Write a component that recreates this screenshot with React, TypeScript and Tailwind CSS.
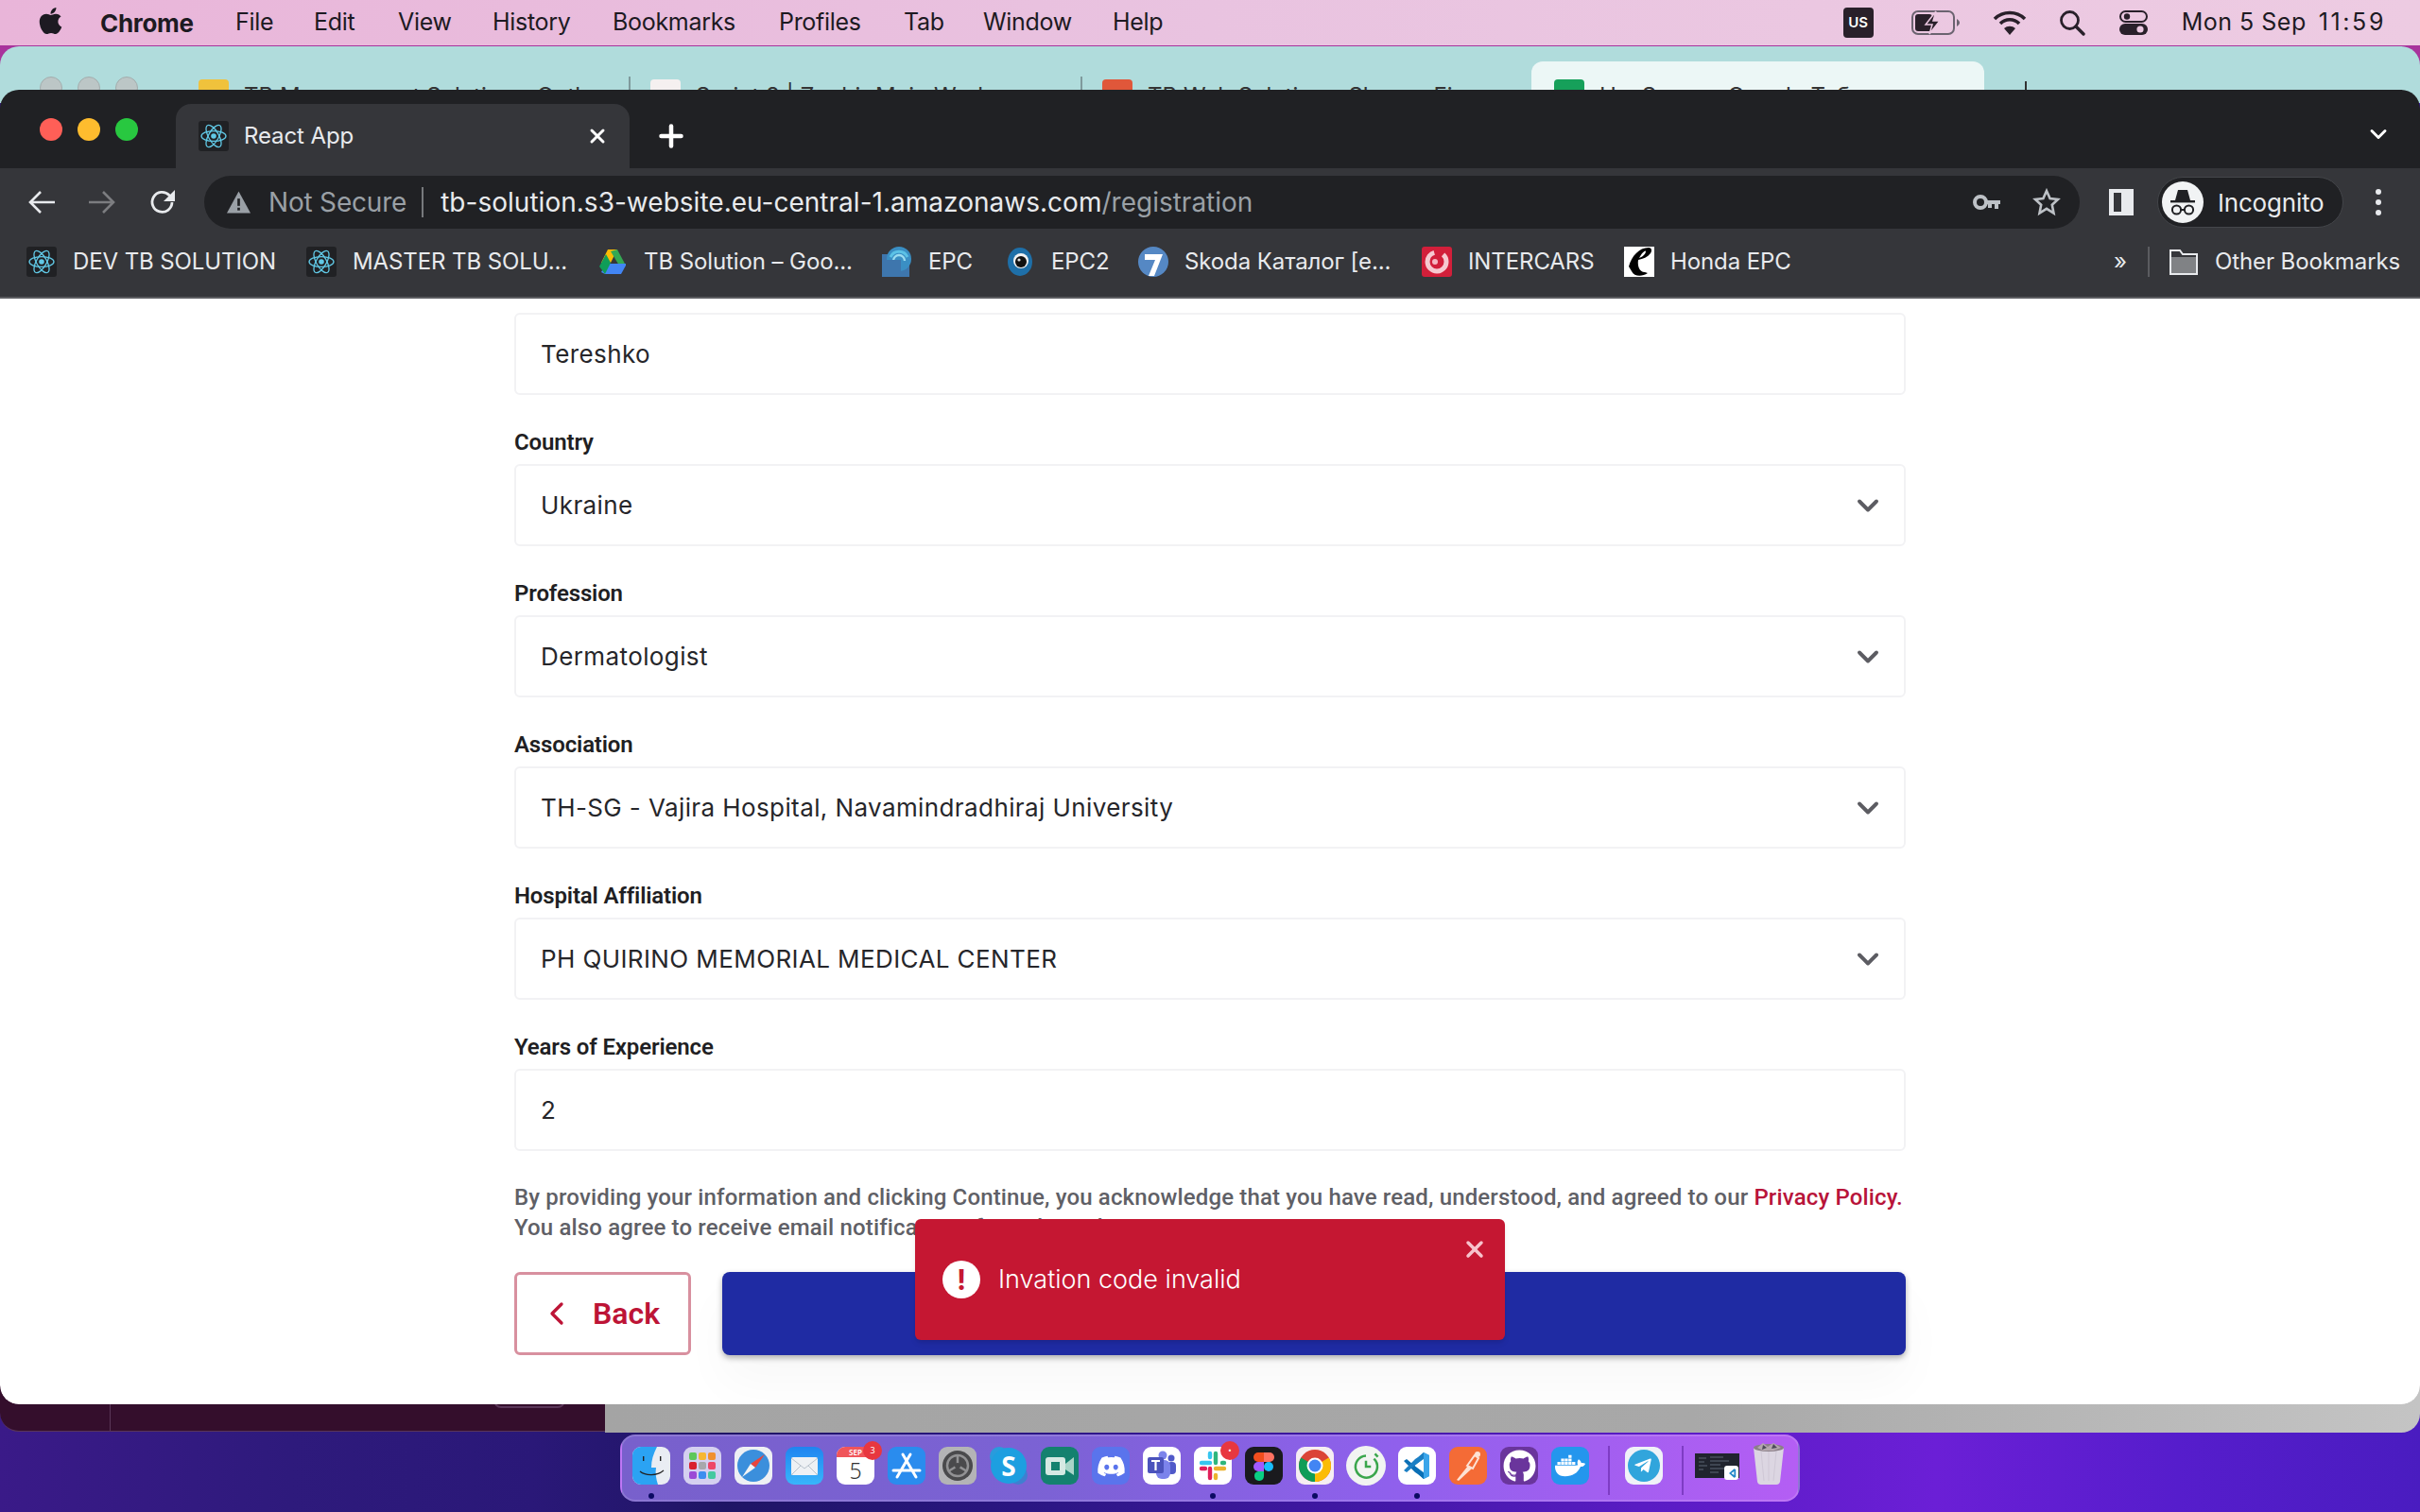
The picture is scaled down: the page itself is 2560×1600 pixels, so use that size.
import { ReactNode } from "react";
import { FaApple, FaDiscord, FaDocker, FaGithub, FaTelegramPlane } from "react-icons/fa";
import { ChevronDown, ChevronLeft, Plus, X } from "lucide-react";

const UI = "font-['Inter','Liberation_Sans',sans-serif]";

function ReactIcon() {
  return (
    <svg viewBox="0 0 32 32" className="w-8 h-8 shrink-0">
      <rect width="32" height="32" rx="3" fill="#202124" />
      <g fill="none" stroke="#61c9e6" strokeWidth="1.3">
        <ellipse cx="16" cy="16" rx="13" ry="5.4" />
        <ellipse cx="16" cy="16" rx="13" ry="5.4" transform="rotate(60 16 16)" />
        <ellipse cx="16" cy="16" rx="13" ry="5.4" transform="rotate(120 16 16)" />
      </g>
      <circle cx="16" cy="16" r="2.8" fill="#61c9e6" />
    </svg>
  );
}

function DriveIcon() {
  return (
    <svg viewBox="0 0 32 32" className="w-8 h-8 shrink-0">
      <polygon points="11,3 21,3 14,17 4,17" fill="#fbbc04" transform="translate(0 0)" />
      <polygon points="21,3 30,20 23,20 14,5" fill="#34a853" />
      <polygon points="4,27 9,18 30,18 30,20 25,29 8,29" fill="#4285f4" />
      <polygon points="2,21 9,8 14,17 8,29" fill="#0f9d58" />
    </svg>
  );
}

function EpcIcon() {
  return (
    <svg viewBox="0 0 32 32" className="w-8 h-8 shrink-0">
      <rect x="0" y="8" width="29" height="24" fill="#3e76ad" />
      <circle cx="18" cy="13" r="13" fill="#3a8fc4" />
      <path d="M9 11a10 10 0 0 1 18 0" fill="none" stroke="#5cc2e6" strokeWidth="3" />
      <path d="M12 15a6 6 0 0 1 12 0" fill="none" stroke="#9adcf0" strokeWidth="2.4" />
      <rect x="0" y="14" width="20" height="18" fill="#3e76ad" />
    </svg>
  );
}

function Epc2Icon() {
  return (
    <svg viewBox="0 0 32 32" className="w-8 h-8 shrink-0">
      <ellipse cx="16" cy="16" rx="13" ry="15" fill="#1e6fa8" />
      <circle cx="17" cy="15" r="8" fill="#f1f1f1" />
      <circle cx="17" cy="16" r="6" fill="#111" />
      <circle cx="15" cy="14" r="1.6" fill="#ddd" />
    </svg>
  );
}

function SkodaIcon() {
  return (
    <svg viewBox="0 0 32 32" className="w-8 h-8 shrink-0">
      <circle cx="16" cy="16" r="16" fill="#5588c4" />
      <path d="M7 8h19l-9 23h-6l7-17H7z" fill="#fff" />
    </svg>
  );
}

function IntercarsIcon() {
  return (
    <svg viewBox="0 0 32 32" className="w-8 h-8 shrink-0">
      <rect width="32" height="32" rx="3" fill="#d21f3a" />
      <circle cx="16" cy="16" r="10" fill="none" stroke="#f6c9d0" strokeWidth="5" strokeDasharray="44 10" />
      <circle cx="14" cy="16" r="3" fill="#f4b6c0" />
    </svg>
  );
}

function HondaIcon() {
  return (
    <svg viewBox="0 0 32 32" className="w-8 h-8 shrink-0">
      <rect width="32" height="32" fill="#fff" />
      <path d="M5 21C8 10 16 1 26 1c3 0 4 3 2 6-3 4-8 6-13 7-1 6 1 13 7 13l3 1c-6 4-14 4-17-2-1-2-2-3-3-5zm11-9c3-1 7-4 7-7 0-2-4 1-7 7z" fill="#000" />
    </svg>
  );
}

function FolderIcon() {
  return (
    <svg viewBox="0 0 32 32" className="w-8 h-8 shrink-0">
      <path d="M2 4h10l3 4h15v21H2z" fill="#35363a" stroke="#e8eaed" strokeWidth="2" />
      <rect x="3" y="11" width="26" height="17" fill="#808285" />
    </svg>
  );
}

function ReactBookmark({ label, width, icon }: { label: string; width: string; icon: ReactNode }) {
  return (
    <div className={`flex items-center gap-[17px] shrink-0 ${width}`}>
      {icon}
      <span className="text-[24px] leading-8 text-[#e8eaed] whitespace-nowrap tracking-[-0.1px]">{label}</span>
    </div>
  );
}

function DockTile({ children, dot }: { children: ReactNode; dot?: boolean }) {
  return (
    <div className="relative w-10 h-10 shrink-0">
      {children}
      {dot && <span className="absolute left-[17px] top-[49px] w-1.5 h-1.5 rounded-full bg-[#0b0a63]" />}
    </div>
  );
}

function Badge({ label }: { label: string }) {
  return (
    <span className="absolute -top-[6px] -right-2 w-5 h-5 rounded-full bg-[#e8373f] text-white text-[9px] leading-5 text-center">
      {label}
    </span>
  );
}

function Dock() {
  return (
    <div className="absolute left-[656px] top-[1518px] w-[1248px] h-[71px] rounded-[16px] border-2 border-[#ffffff26] bg-[linear-gradient(90deg,#7860cc_0%,#7b62d4_35%,#8f60ec_65%,#b45ef4_100%)] flex items-start pl-[11px] pt-[11px] gap-[14px]">
      <DockTile dot>
        <svg viewBox="0 0 40 40" className="w-10 h-10">
          <rect width="40" height="40" rx="9" fill="#e9edf3" />
          <path d="M9 0h17c-4 8-6 14-6 22h5c-1 6 0 12 2 18H9a9 9 0 0 1-9-9V9a9 9 0 0 1 9-9z" fill="#2ba3f3" />
          <path d="M8 26c6 5 18 5 25-1" fill="none" stroke="#222" strokeWidth="1.2" />
          <rect x="11" y="10" width="1.4" height="5" fill="#222" />
          <rect x="29" y="10" width="1.4" height="5" fill="#222" />
        </svg>
      </DockTile>
      <DockTile>
        <svg viewBox="0 0 40 40" className="w-10 h-10">
          <rect width="40" height="40" rx="9" fill="#d5d0f0" />
          {[
            [6, 6, "#5fc75a"], [16, 6, "#f7b733"], [26, 6, "#f0902f"],
            [6, 16, "#d9202e"], [16, 16, "#a8a8ac"], [26, 16, "#ee4766"],
            [6, 26, "#9b4bd6"], [16, 26, "#3c8df0"], [26, 26, "#45c9a0"],
          ].map(([x, y, c]) => (
            <rect key={`${x}-${y}`} x={x as number} y={y as number} width="8" height="8" rx="2" fill={c as string} />
          ))}
        </svg>
      </DockTile>
      <DockTile>
        <svg viewBox="0 0 40 40" className="w-10 h-10">
          <rect width="40" height="40" rx="9" fill="#eef0f4" />
          <circle cx="20" cy="20" r="17" fill="#3b8fdc" />
          <polygon points="32,8 17,18 22,22" fill="#e8453c" />
          <polygon points="8,32 17,18 22,22" fill="#f4f4f4" />
        </svg>
      </DockTile>
      <DockTile>
        <svg viewBox="0 0 40 40" className="w-10 h-10">
          <defs>
            <linearGradient id="mail" x1="0" y1="0" x2="0" y2="1">
              <stop offset="0" stopColor="#1f84f0" />
              <stop offset="1" stopColor="#38b6fb" />
            </linearGradient>
          </defs>
          <rect width="40" height="40" rx="9" fill="url(#mail)" />
          <rect x="6" y="11" width="28" height="19" rx="2" fill="#eef1f4" />
          <path d="M6 12l14 11 14-11M6 30l10-10M34 30L24 20" fill="none" stroke="#b9c2cc" strokeWidth="1" />
        </svg>
      </DockTile>
      <DockTile>
        <div className="w-10 h-10 rounded-[9px] overflow-hidden bg-white flex flex-col items-center">
          <div className="w-full h-[11px] bg-[#f0555a] text-white text-[8px] leading-[11px] text-center font-semibold">SEP</div>
          <div className="text-[#333] text-[23px] leading-[29px] font-light">5</div>
        </div>
        <Badge label="3" />
      </DockTile>
      <DockTile>
        <svg viewBox="0 0 40 40" className="w-10 h-10">
          <rect width="40" height="40" rx="9" fill="#2a8cee" />
          <path d="M16 8l14 24M24 8L10 32M6 25h28" fill="none" stroke="#fff" strokeWidth="3" strokeLinecap="round" />
        </svg>
      </DockTile>
      <DockTile>
        <svg viewBox="0 0 40 40" className="w-10 h-10">
          <rect width="40" height="40" rx="9" fill="#b4b4b6" />
          <circle cx="20" cy="20" r="16" fill="#4a4a4c" />
          <circle cx="20" cy="20" r="11" fill="none" stroke="#929294" strokeWidth="2.5" />
          <path d="M20 20V9M20 20l-10 6M20 20l10 6" stroke="#929294" strokeWidth="2.5" />
          <circle cx="20" cy="20" r="3" fill="#4a4a4c" />
        </svg>
      </DockTile>
      <DockTile>
        <div className="relative w-10 h-10">
          <span className="absolute left-0 top-0 w-5 h-5 rounded-full bg-[#2a9bdc]" />
          <span className="absolute right-0 bottom-0 w-5 h-5 rounded-full bg-[#3f7fd0]" />
          <span className="absolute left-[1px] top-[1px] w-[38px] h-[38px] rounded-full bg-[#1d9fe0] text-white text-[28px] leading-[38px] font-bold text-center">S</span>
        </div>
      </DockTile>
      <DockTile>
        <svg viewBox="0 0 40 40" className="w-10 h-10">
          <rect width="40" height="40" rx="9" fill="#14816f" />
          <rect x="5" y="11" width="21" height="19" rx="3" fill="#d5e9e3" />
          <rect x="11" y="16" width="9" height="9" fill="#14816f" />
          <polygon points="26,18 35,11 35,30 26,24" fill="#a9d5c9" />
        </svg>
      </DockTile>
      <DockTile>
        <div className="w-10 h-10 rounded-[9px] bg-[#5a74ec] flex items-center justify-center text-white">
          <FaDiscord className="w-[31px] h-[31px]" />
        </div>
      </DockTile>
      <DockTile>
        <svg viewBox="0 0 40 40" className="w-10 h-10">
          <rect width="40" height="40" rx="9" fill="#fff" />
          <circle cx="30" cy="12" r="3.5" fill="#5059c9" />
          <rect x="26" y="16" width="9" height="13" rx="4" fill="#5059c9" />
          <circle cx="21" cy="9" r="4.5" fill="#7b83eb" />
          <rect x="14" y="14" width="15" height="20" rx="6" fill="#7b83eb" />
          <rect x="5" y="11" width="17" height="17" rx="2" fill="#4b53bc" />
          <path d="M9 15h9M13.5 15v10" stroke="#fff" strokeWidth="2.2" />
        </svg>
      </DockTile>
      <DockTile dot>
        <svg viewBox="0 0 40 40" className="w-10 h-10">
          <rect width="40" height="40" rx="9" fill="#fff" />
          <g strokeWidth="4.4" strokeLinecap="round">
            <path d="M8 17h9" stroke="#36c5f0" />
            <path d="M23 7v10" stroke="#2eb67d" />
            <path d="M32 23h-9" stroke="#ecb22e" />
            <path d="M17 33v-10" stroke="#e01e5a" />
            <path d="M8 23h4" stroke="#e01e5a" />
            <path d="M17 7v4" stroke="#36c5f0" />
            <path d="M32 17h-2" stroke="#2eb67d" />
            <path d="M23 33v-3" stroke="#ecb22e" />
          </g>
        </svg>
        <Badge label="•" />
      </DockTile>
      <DockTile>
        <svg viewBox="0 0 40 40" className="w-10 h-10">
          <rect width="40" height="40" rx="9" fill="#1a1a1e" />
          <path d="M20 6h-6a5 5 0 0 0 0 10h6z" fill="#f24e1e" />
          <path d="M20 6h6a5 5 0 0 1 0 10h-6z" fill="#ff7262" />
          <path d="M20 16h-6a5 5 0 0 0 0 10h6z" fill="#a259ff" />
          <circle cx="25" cy="21" r="5" fill="#1abcfe" />
          <path d="M14 26h6v5a5 5 0 1 1-6-5z" fill="#0acf83" />
        </svg>
      </DockTile>
      <DockTile dot>
        <svg viewBox="0 0 40 40" className="w-10 h-10">
          <rect width="40" height="40" rx="9" fill="#f6eef2" />
          <circle cx="20" cy="20" r="17" fill="#db4437" />
          <path d="M20 20L34.7 11.5A17 17 0 0 1 20 37z" fill="#fbbc05" />
          <path d="M20 20L20 37A17 17 0 0 1 5.3 11.5z" fill="#0f9d58" />
          <circle cx="20" cy="20" r="8.5" fill="#fff" />
          <circle cx="20" cy="20" r="6.5" fill="#4285f4" />
        </svg>
      </DockTile>
      <DockTile>
        <svg viewBox="0 0 40 40" className="w-[42px] h-[42px] -ml-px -mt-px">
          <circle cx="20" cy="20" r="20" fill="#f2f4f2" />
          <path d="M28 13a11 11 0 1 1-8-3" fill="none" stroke="#3aa64c" strokeWidth="2.4" />
          <path d="M20 15v6h5" fill="none" stroke="#3aa64c" strokeWidth="2.4" />
          <path d="M29 8l3 3" stroke="#3aa64c" strokeWidth="2.4" />
        </svg>
      </DockTile>
      <DockTile dot>
        <svg viewBox="0 0 40 40" className="w-10 h-10">
          <rect width="40" height="40" rx="9" fill="#fff" />
          <path d="M27 6L12 20l15 14 6-3V9z" fill="#2489ca" />
          <path d="M27 13v14l-10-7z" fill="#fff" />
          <path d="M27 6l6 3v22l-6 3z" fill="#3aa5ea" />
          <path d="M6 15l3-2 18 15v6l-6-5-3-2z" fill="#0a6fb5" />
          <path d="M6 25l3 2 18-15V6l-6 5-3 2z" fill="#1b7fc4" />
        </svg>
      </DockTile>
      <DockTile>
        <svg viewBox="0 0 40 40" className="w-10 h-10">
          <rect width="40" height="40" rx="9" fill="#f46b36" />
          <path d="M8 35l12-15 4 3L10 36z" fill="#fde2d4" />
          <path d="M19 20l8-11 4 3-6 11z" fill="none" stroke="#fde2d4" strokeWidth="2" />
          <circle cx="30" cy="8" r="3" fill="#fde2d4" />
        </svg>
      </DockTile>
      <DockTile>
        <div className="w-10 h-10 rounded-[9px] bg-[#6a359c] flex items-center justify-center text-white">
          <FaGithub className="w-[35px] h-[35px]" />
        </div>
      </DockTile>
      <DockTile>
        <div className="w-10 h-10 rounded-[9px] bg-[#2496ed] flex items-center justify-center text-white">
          <FaDocker className="w-[32px] h-[32px]" />
        </div>
      </DockTile>
      <div className="w-[2px] h-[52px] -mt-[1px] ml-[6px] mr-[2px] bg-[#7e3cc4] shrink-0" />
      <DockTile>
        <div className="w-10 h-10 rounded-[9px] bg-[#f0f2f8] flex items-center justify-center">
          <div className="w-[34px] h-[34px] rounded-full bg-[#31a5dc] flex items-center justify-center text-white">
            <FaTelegramPlane className="w-5 h-5 -ml-0.5" />
          </div>
        </div>
      </DockTile>
      <div className="w-[2px] h-[52px] -mt-[1px] ml-[6px] -mr-[2px] bg-[#7e3cc4] shrink-0" />
      <div className="relative w-[47px] h-10 shrink-0">
        <svg viewBox="0 0 47 26" className="absolute top-[7px] left-0 w-[47px] h-[26px]">
          <rect width="47" height="26" fill="#20242e" />
          <path d="M4 5h8M4 9h6M4 13h9M4 17h5M16 4h14M16 8h20M16 12h11M16 16h16M16 20h9" stroke="#5d6675" strokeWidth="1" />
        </svg>
        <div className="absolute top-[20px] left-[31px] w-[15px] h-[15px] rounded-[3px] bg-white flex items-center justify-center">
          <svg viewBox="0 0 40 40" className="w-3 h-3">
            <path d="M28 4L10 20l18 16 6-3V7zM28 13L18 20l10 7z" fill="#2489ca" fillRule="evenodd" />
          </svg>
        </div>
      </div>
      <svg viewBox="0 0 36 46" className="w-9 h-[46px] -mt-[5px] -ml-[1px] shrink-0">
        <path d="M2 6h32l-4 36a4 4 0 0 1-4 3H10a4 4 0 0 1-4-3z" fill="#dcd6e2" />
        <path d="M10 10l3 31M18 10v31M26 10l-3 31" stroke="#cfc8d6" strokeWidth="1" />
        <ellipse cx="18" cy="6" rx="16" ry="4" fill="#8b7f88" />
        <path d="M6 6l6-5 5 4 6-4 8 5-8 3H12z" fill="#b4a7ae" />
        <path d="M12 3l4 3-5 2zM23 2l4 4-6 1z" fill="#4c4a5a" />
      </svg>
    </div>
  );
}

function MenuBar() {
  return (
    <div className={`relative h-12 flex items-center justify-between bg-[linear-gradient(90deg,#e9b5d9_0%,#e9c3e0_50%,#edcbe2_100%)] text-[#1d1a22] ${UI}`}>
      <div className="flex items-center pl-[39px] text-[25px] tracking-[-0.3px]">
        <FaApple className="w-[29px] h-[32px] -mt-1" />
        <span className="font-bold text-[26px] ml-[38px] w-[143px]">Chrome</span>
        <span className="w-[83px]">File</span>
        <span className="w-[89px]">Edit</span>
        <span className="w-[100px]">View</span>
        <span className="w-[127px]">History</span>
        <span className="w-[176px]">Bookmarks</span>
        <span className="w-[132px]">Profiles</span>
        <span className="w-[84px]">Tab</span>
        <span className="w-[137px]">Window</span>
        <span>Help</span>
      </div>
      <div className="flex items-center pr-[36px] text-[25px]">
        <span className="w-8 h-8 rounded-[4px] bg-[#29202a] text-white text-[15px] font-semibold text-center leading-8">US</span>
        <svg viewBox="0 0 52 26" className="w-[52px] h-[26px] ml-[40px]">
          <rect x="1" y="1" width="44" height="24" rx="6" fill="none" stroke="#6b6370" strokeWidth="2" />
          <rect x="4" y="4" width="18" height="18" rx="3" fill="#29202a" />
          <path d="M26 1l-11 14h7l-3 10 11-14h-7z" fill="#29202a" stroke="#ebc8e1" strokeWidth="1.5" />
          <path d="M48 9c2 1 3 3 3 4s-1 3-3 4z" fill="#6b6370" />
        </svg>
        <svg viewBox="0 0 36 28" className="w-9 h-7 ml-[34px]">
          <path d="M2 10a23 23 0 0 1 32 0" fill="none" stroke="#29202a" strokeWidth="3.6" />
          <path d="M8 15a14 14 0 0 1 20 0" fill="none" stroke="#29202a" strokeWidth="3.6" />
          <path d="M18 27l-6-7a9 9 0 0 1 12 0z" fill="#29202a" />
        </svg>
        <svg viewBox="0 0 28 28" className="w-7 h-7 ml-[34px]">
          <circle cx="11.5" cy="11.5" r="9" fill="none" stroke="#29202a" strokeWidth="2.8" />
          <path d="M18 18l8 8" stroke="#29202a" strokeWidth="3.4" strokeLinecap="round" />
        </svg>
        <svg viewBox="0 0 30 26" className="w-[30px] h-[26px] ml-[36px]">
          <rect x="1" y="1" width="28" height="11" rx="5.5" fill="none" stroke="#29202a" strokeWidth="2" />
          <circle cx="8" cy="6.5" r="3.2" fill="#29202a" />
          <rect x="0" y="14" width="30" height="12" rx="6" fill="#29202a" />
          <circle cx="22" cy="20" r="3.6" fill="#ebc8e1" />
        </svg>
        <span className="ml-[36px] tracking-[0.5px]">Mon 5 Sep</span>
        <span className="ml-[13px] tracking-[2.6px]">11:59</span>
      </div>
    </div>
  );
}

function BackWindow() {
  return (
    <>
      <div className="absolute left-0 top-12 w-full h-12 bg-[#a8339c]" />
      <div className={`absolute left-0 top-[49px] w-full h-[60px] rounded-t-[20px] bg-[#b0dcdc] overflow-hidden ${UI}`}>
        <div className="flex items-start pl-[42px] pt-[32px]">
          <span className="w-6 h-6 rounded-full bg-[#bcc6c6] border border-[#a2adad]" />
          <span className="w-6 h-6 rounded-full bg-[#bcc6c6] border border-[#a2adad] ml-4" />
          <span className="w-6 h-6 rounded-full bg-[#bcc6c6] border border-[#a2adad] ml-4" />
        </div>
        <span className="absolute left-[665px] top-[32px] w-0.5 h-10 bg-[#7f9a9c]" />
        <span className="absolute left-[1143px] top-[32px] w-0.5 h-10 bg-[#7f9a9c]" />
        <span className="absolute left-[2142px] top-[37px] w-0.5 h-10 bg-[#333]" />
      </div>
      <div className={`absolute left-[210px] top-[84px] w-[2100px] h-[11px] overflow-hidden flex text-[24px] leading-8 text-[#333] ${UI}`}>
        <div className="w-[478px] shrink-0 flex">
          <span className="w-8 h-8 bg-[#f0c23c] mr-4 rounded-sm" />
          <span className="mt-[2px]">TB Management Solution - Outl</span>
        </div>
        <div className="w-[478px] shrink-0 flex">
          <span className="w-8 h-8 bg-[#f5f0f0] mr-4 rounded-sm" />
          <span className="mt-[2px]">Sprint 8 | Zephir Main Work</span>
        </div>
        <div className="w-[476px] shrink-0 flex">
          <span className="w-8 h-8 bg-[#e0573a] mr-4 rounded-sm" />
          <span className="mt-[2px]">TB Web Solution - Share - Fi</span>
        </div>
      </div>
      <div className={`absolute left-[1620px] top-[65px] w-[479px] h-[30px] rounded-t-[12px] bg-[#ecf7f6] overflow-hidden text-[24px] leading-8 text-[#333] ${UI}`}>
        <div className="flex pl-6 pt-[19px]">
          <span className="w-8 h-8 bg-[#16a05a] mr-4 rounded-sm" />
          <span className="mt-[2px]">HeyScore - Google Таблицы</span>
        </div>
      </div>
      <div className="absolute left-0 top-[1400px] w-[640px] h-[115px] bg-[#340e2c] rounded-bl-[20px] border-b border-[#5a3658]">
        <div className="absolute left-[116px] top-0 w-px h-full bg-[#5a3658]" />
        <div className="absolute left-[522px] top-[70px] w-[76px] h-[20px] rounded-[8px] border-2 border-[#5a3658]" />
      </div>
      <div className="absolute left-[640px] top-[1400px] w-[1920px] h-[116px] rounded-br-[20px] bg-[linear-gradient(90deg,#a4a4a4_0%,#a8a8a8_60%,#c4c4c4_100%)]" />
    </>
  );
}

function Field({ label, value, select }: { label?: string; value: string; select?: boolean }) {
  return (
    <div className="flex flex-col">
      {label && <label className="text-[24px] leading-8 font-semibold text-[#1f1f23] mt-[34px] mb-[7px] tracking-[-0.15px]">{label}</label>}
      <div className="h-[87px] rounded-[6px] border-2 border-[#f2f2f4] bg-white flex items-center justify-between pl-[26px] pr-[20px]">
        <span className={`text-[26px] text-[#26262a] tracking-[0.4px] ${UI}`}>{value}</span>
        {select && <ChevronDown className="w-9 h-9 text-[#5c5c62]" strokeWidth={2.6} />}
      </div>
    </div>
  );
}

function Page() {
  return (
    <div className="relative flex-1 bg-white rounded-b-[20px] overflow-hidden">
      <div className="w-[1472px] ml-[544px] pt-[15px] flex flex-col font-['Roboto','Inter',sans-serif]">
        <Field value="Tereshko" />
        <Field label="Country" value="Ukraine" select />
        <Field label="Profession" value="Dermatologist" select />
        <Field label="Association" value="TH-SG - Vajira Hospital, Navamindradhiraj University" select />
        <Field label="Hospital Affiliation" value="PH QUIRINO MEMORIAL MEDICAL CENTER" select />
        <Field label="Years of Experience" value="2" />
        <p className="mt-[33px] text-[24px] leading-8 font-medium text-[#5f6066] whitespace-nowrap tracking-[0.15px]">
          By providing your information and clicking Continue, you acknowledge that you have read, understood, and agreed to our{" "}
          <span className="text-[#b8143a]">Privacy Policy.</span>
          <br />
          You also agree to receive email notifications from the website.
        </p>
        <div className="mt-[31px] flex gap-[33px]">
          <button className="w-[187px] h-[88px] rounded-[6px] border-[3px] border-[#d8909f] bg-white flex items-center justify-center gap-[18px] text-[#bd1436] text-[32px] font-semibold">
            <ChevronLeft className="w-10 h-10 -ml-2" strokeWidth={2} />
            Back
          </button>
          <button className="flex-1 h-[88px] rounded-[8px] bg-[#1f2ba3] shadow-[0_3px_6px_rgba(0,0,0,0.3),0_30px_50px_rgba(0,0,0,0.03)]" />
        </div>
      </div>
      <div className="absolute left-[968px] top-[974px] w-[624px] h-[128px] rounded-[6px] bg-[#c51732] shadow-md">
        <div className="flex items-center h-full pl-[29px]">
          <span className="w-10 h-10 rounded-full bg-white text-[#c51732] text-[30px] font-bold leading-10 text-center">!</span>
          <span className="ml-[19px] text-[27px] text-white font-light">Invation code invalid</span>
        </div>
        <X className="absolute right-[18px] top-[18px] w-7 h-7 text-[#f7c3cc]" strokeWidth={3} />
      </div>
    </div>
  );
}

function ChromeWindow() {
  return (
    <div className={`absolute left-0 top-[95px] w-full h-[1391px] flex flex-col rounded-[20px] overflow-hidden ${UI}`}>
      <div className="h-[83px] shrink-0 bg-[#202124] flex items-end relative">
        <div className="absolute left-[42px] top-[30px] flex gap-4">
          <span className="w-6 h-6 rounded-full bg-[#ff5f57]" />
          <span className="w-6 h-6 rounded-full bg-[#febc2e]" />
          <span className="w-6 h-6 rounded-full bg-[#28c840]" />
        </div>
        <div className="ml-[186px] w-[480px] h-[68px] bg-[#35363a] rounded-t-[16px] flex items-center pl-6 pr-[22px]">
          <ReactIcon />
          <span className="ml-4 text-[24px] text-[#e8eaed] tracking-[-0.1px]">React App</span>
          <X className="ml-auto w-6 h-6 text-white" strokeWidth={3} />
        </div>
        <Plus className="ml-[26px] mb-[16px] w-9 h-9 text-white" strokeWidth={3} />
        <ChevronDown className="absolute right-[30px] top-[33px] w-7 h-7 text-white" strokeWidth={2.5} />
      </div>
      <div className="h-[72px] shrink-0 bg-[#35363a] flex items-center">
        <svg viewBox="0 0 28 26" className="w-7 h-[26px] ml-[30px] text-[#e8eaed]" fill="none" stroke="currentColor" strokeWidth="2.6">
          <path d="M28 13H3M13 2L2 13l11 11" />
        </svg>
        <svg viewBox="0 0 28 26" className="w-7 h-[26px] ml-[36px] text-[#7c7d80]" fill="none" stroke="currentColor" strokeWidth="2.6">
          <path d="M0 13h25M15 2l11 11-11 11" />
        </svg>
        <svg viewBox="0 0 28 28" className="w-7 h-7 ml-[36px] text-[#e8eaed]" fill="none" stroke="currentColor" strokeWidth="2.8">
          <path d="M24 14a10.5 10.5 0 1 1-3-7.5L25 10" />
          <path d="M27 1v12H15z" fill="currentColor" stroke="none" />
        </svg>
        <div className="ml-[30px] w-[1984px] h-[56px] rounded-full bg-[#202124] flex items-center pl-6 text-[28px]">
          <svg viewBox="0 0 26 24" className="w-[25px] h-6 text-[#9aa0a6]">
            <path d="M13 0l13 24H0z" fill="currentColor" />
            <rect x="11.6" y="8" width="2.8" height="8" fill="#202124" />
            <rect x="11.6" y="18" width="2.8" height="3" fill="#202124" />
          </svg>
          <span className="ml-[19px] text-[#9aa0a6] tracking-[-0.2px]">Not Secure</span>
          <span className="ml-4 w-0.5 h-8 bg-[#77797c]" />
          <span className="ml-[18px] text-[#e8eaed] tracking-[0.02px]">tb-solution.s3-website.eu-central-1.amazonaws.com</span>
          <span className="text-[#9aa0a6]">/registration</span>
          <svg viewBox="0 0 30 20" className="w-[30px] h-5 ml-auto text-[#bdc1c6]">
            <circle cx="8" cy="10" r="6" fill="none" stroke="currentColor" strokeWidth="4" />
            <path d="M13 8h16v4h-2v5h-4v-5h-3v4h-4v-4h-3z" fill="currentColor" />
          </svg>
          <svg viewBox="0 0 30 30" className="w-[30px] h-[30px] ml-[33px] mr-5 text-[#bdc1c6]" fill="none" stroke="currentColor" strokeWidth="2.6">
            <path d="M15 3l3.6 8 8.4 1-6.2 5.8 1.7 8.7L15 21.9l-7.5 4.6 1.7-8.7L3 12l8.4-1z" />
          </svg>
        </div>
        <svg viewBox="0 0 26 28" className="w-[26px] h-7 ml-[31px] text-[#e8eaed]">
          <path d="M0 0h26v28H0zM5 4v20h8V4z" fill="currentColor" fillRule="evenodd" />
        </svg>
        <div className="ml-[25px] w-[197px] h-[54px] rounded-full bg-[#202124] border border-[#44464a] flex items-center pl-[4px]">
          <svg viewBox="0 0 44 44" className="w-[44px] h-[44px]">
            <circle cx="22" cy="22" r="22" fill="#f1f3f4" />
            <path d="M14 20l3-11h10l3 11z" fill="#202124" />
            <rect x="9" y="20" width="26" height="2.4" fill="#202124" />
            <circle cx="15.5" cy="30" r="4.6" fill="none" stroke="#202124" strokeWidth="2" />
            <circle cx="28.5" cy="30" r="4.6" fill="none" stroke="#202124" strokeWidth="2" />
            <path d="M20 30h4" stroke="#202124" strokeWidth="2" />
          </svg>
          <span className="ml-[15px] text-[26px] text-[#e8eaed] tracking-[-0.2px]">Incognito</span>
        </div>
        <div className="ml-[34px] flex flex-col gap-[5px]">
          <span className="w-[6px] h-[6px] rounded-full bg-[#e8eaed]" />
          <span className="w-[6px] h-[6px] rounded-full bg-[#e8eaed]" />
          <span className="w-[6px] h-[6px] rounded-full bg-[#e8eaed]" />
        </div>
      </div>
      <div className="h-[66px] shrink-0 bg-[#35363a] border-b-2 border-[#5b5c60] flex items-center pl-7 pb-[10px]">
        <ReactBookmark label="DEV TB SOLUTION" width="w-[296px]" icon={<ReactIcon />} />
        <ReactBookmark label="MASTER TB SOLU..." width="w-[308px]" icon={<ReactIcon />} />
        <ReactBookmark label="TB Solution – Goo..." width="w-[301px]" icon={<DriveIcon />} />
        <ReactBookmark label="EPC" width="w-[130px]" icon={<EpcIcon />} />
        <ReactBookmark label="EPC2" width="w-[141px]" icon={<Epc2Icon />} />
        <ReactBookmark label="Skoda Каталог [е..." width="w-[300px]" icon={<SkodaIcon />} />
        <ReactBookmark label="INTERCARS" width="w-[214px]" icon={<IntercarsIcon />} />
        <ReactBookmark label="Honda EPC" width="w-[518px]" icon={<HondaIcon />} />
        <span className="text-[24px] text-[#e8eaed] w-[36px]">»</span>
        <span className="w-0.5 h-8 bg-[#5b5c60] mr-5" />
        <ReactBookmark label="Other Bookmarks" width="w-[244px]" icon={<FolderIcon />} />
      </div>
      <Page />
    </div>
  );
}

export default function App() {
  return (
    <div className="relative w-[2560px] h-[1600px] overflow-hidden bg-[linear-gradient(90deg,#3a1a88_0%,#2e1a7c_12%,#2a1878_22%,#1f1565_30%,#2a1682_42%,#3f18a2_55%,#5a1cc4_68%,#6b1fd6_80%,#561dcc_90%,#4a1cc0_100%)]">
      <MenuBar />
      <BackWindow />
      <ChromeWindow />
      <Dock />
    </div>
  );
}
